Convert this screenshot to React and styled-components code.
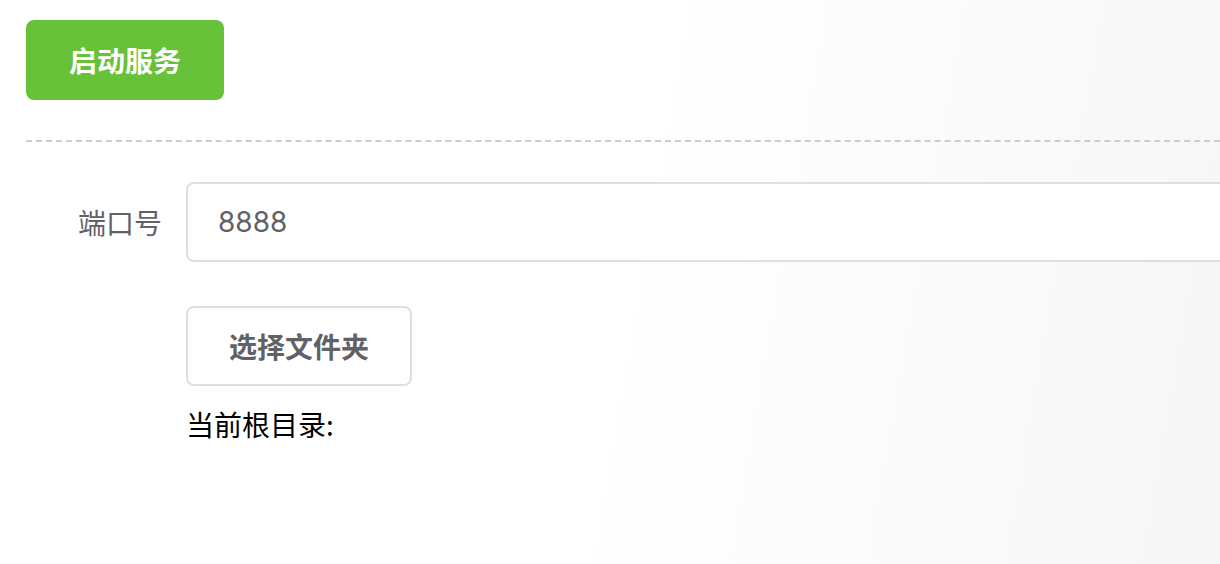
import React from "react";
import styled, { createGlobalStyle } from "styled-components";

const GlobalStyle = createGlobalStyle`
  html, body {
    margin: 0;
    padding: 0;
    overflow: hidden;
  }
  body {
    min-height: 564px;
    background: linear-gradient(100deg, #ffffff 50%, #f6f6f6 100%);
    font-family: "Liberation Sans", "Noto Sans CJK SC", sans-serif;
  }
`;

const Page = styled.div`
  width: 1320px;
  padding: 20px 0 0 26px;
  box-sizing: border-box;
`;

const Button = styled.button`
  height: 80px;
  padding: 0 41px;
  border-radius: 8px;
  font-family: "Noto Sans CJK SC", sans-serif;
  font-size: 28px;
  font-weight: 700;
  cursor: pointer;
  box-sizing: border-box;
  border: 2px solid ${(p) => (p.primary ? "#67c23a" : "#dcdfe6")};
  background: ${(p) => (p.primary ? "#67c23a" : "#fff")};
  color: ${(p) => (p.primary ? "#fff" : "#606266")};
`;

const StartButton = styled(Button)`
  width: 198px;
  padding: 0;
`;

const Divider = styled.div`
  border-top: 2px dashed #cccccc;
  margin: 40px 0 40px;
`;

const Form = styled.div`
  display: flex;
  flex-direction: column;
`;

const Row = styled.div`
  display: flex;
  align-items: center;
  margin-bottom: ${(p) => p.gap || 0}px;
`;

const Label = styled.label`
  width: 160px;
  padding-right: 24px;
  box-sizing: border-box;
  text-align: right;
  font-family: "Noto Sans CJK SC", sans-serif;
  font-size: 28px;
  color: #606266;
`;

const Field = styled.div`
  flex: 1;
  margin-left: ${(p) => (p.offset ? 160 : 0)}px;
`;

const Input = styled.input`
  width: 100%;
  height: 80px;
  box-sizing: border-box;
  border: 2px solid #dcdfe6;
  border-radius: 8px;
  padding: 0 30px;
  font-family: Inter, "Noto Sans CJK SC", sans-serif;
  font-size: 28px;
  color: #606266;
  background: #fff;
  outline: none;
`;

const RootText = styled.div`
  margin-top: 18px;
  font-family: "Noto Sans CJK SC", sans-serif;
  font-size: 28px;
  line-height: 40px;
  color: #000;
`;

export default function App() {
  return (
    <>
      <GlobalStyle />
      <Page>
        <StartButton primary>启动服务</StartButton>
        <Divider />
        <Form>
          <Row gap={44}>
            <Label>端口号</Label>
            <Field>
              <Input defaultValue="8888" />
            </Field>
          </Row>
          <Row>
            <Field offset>
              <Button>选择文件夹</Button>
              <RootText>当前根目录:</RootText>
            </Field>
          </Row>
        </Form>
      </Page>
    </>
  );
}
